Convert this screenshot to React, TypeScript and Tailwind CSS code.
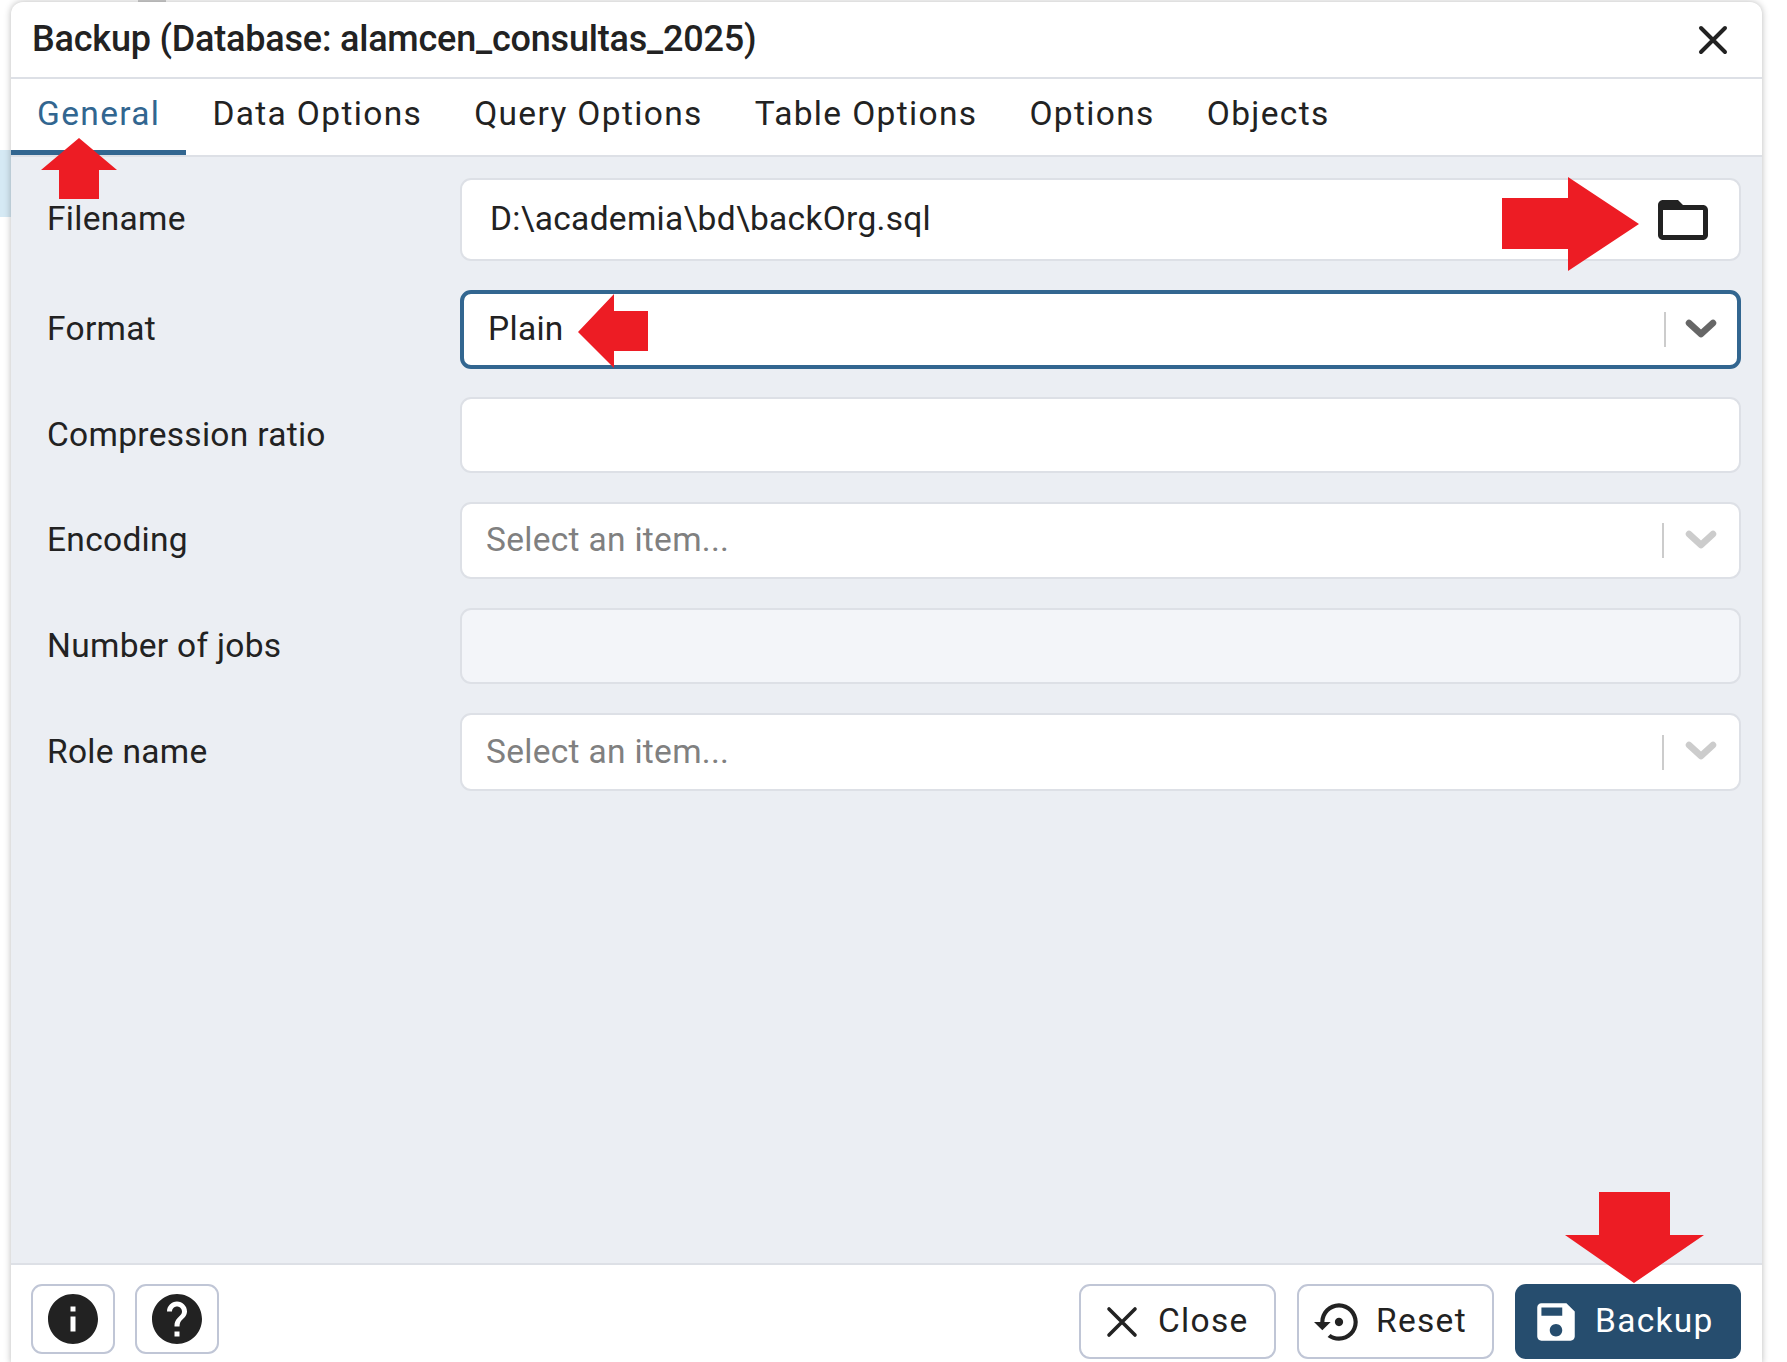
const F = "[font-family:Roboto,'Liberation_Sans',sans-serif]";

function Chevron({ active }: { active?: boolean }) {
  return (
    <svg width="36" height="26" viewBox="0 0 36 26" className="shrink-0">
      <polyline points="6,6 18,17 30,6" fill="none" stroke={active ? "#666666" : "#cccccc"} strokeWidth="6.5" strokeLinecap="round" strokeLinejoin="round" />
    </svg>
  );
}

function MuiIcon({ d, size, className }: { d: string; size: number; className?: string }) {
  return (
    <svg width={size} height={size} viewBox="0 0 24 24" className={className} fill="currentColor">
      <path d={d} />
    </svg>
  );
}

function Row({ label, labelClass, inputClass, children }: { label: string; labelClass?: string; inputClass: string; children?: React.ReactNode }) {
  return (
    <div className="flex items-center">
      <div className={`w-[449px] pl-[36px] text-[33.5px] tracking-[0.3px] text-[#222222] ${labelClass ?? ""}`}>{label}</div>
      <div className={`flex-1 rounded-[11px] flex items-center ${inputClass}`}>{children}</div>
    </div>
  );
}

function SelectEnd({ active }: { active?: boolean }) {
  return (
    <div className="ml-auto flex items-center">
      <div className="w-[2px] h-[35px] bg-[#cccccc]" />
      <div className="ml-[19px] mr-[20px]"><Chevron active={active} /></div>
    </div>
  );
}

const tabs = ["General", "Data Options", "Query Options", "Table Options", "Options", "Objects"];

export default function App() {
  return (
    <div className={`relative w-[1787px] h-[1362px] overflow-hidden bg-white pl-[11px] pt-[2px] ${F}`}>
      <div className="absolute left-0 top-[150px] w-[11px] h-[67px] bg-[#d5e9f4]" />
      <div className="absolute left-[138px] top-0 w-[28px] h-[2px] bg-[#cfcfcf]" />

      <div className="relative w-[1751px] h-[1362px] flex flex-col bg-white rounded-t-[12px] shadow-[0_0_7px_rgba(0,0,0,0.28)]">
        <div className="h-[77px] shrink-0 flex items-center justify-between pl-[21px] pr-[34px] border-b-[2px] border-[#dde0e6]">
          <div className="text-[36px] font-medium text-[#222222] tracking-[-0.2px] leading-none -mt-[2px]">Backup (Database: alamcen_consultas_2025)</div>
          <svg width="30" height="30" viewBox="0 0 30 30" className="mr-[0px]">
            <path d="M3 3 L27 27 M27 3 L3 27" stroke="#222222" strokeWidth="4" strokeLinecap="round" />
          </svg>
        </div>

        <div className="h-[78px] shrink-0 flex border-b-[2px] border-[#dde0e6]">
          {tabs.map((t, i) => (
            <div key={t} className={`h-[76px] px-[26px] flex items-center text-[33.5px] tracking-[1.35px] border-b-[5px] ${i === 0 ? "text-[#326690] border-[#326690]" : "text-[#222222] border-transparent"}`}>
              {t}
            </div>
          ))}
        </div>

        <div className="flex-1 bg-[#ebeef3] pt-[21px] pr-[21px] flex flex-col">
          <Row label="Filename" inputClass="h-[83px] bg-white border-[2px] border-[#dde0e6]">
            <span className="pl-[28px] text-[33.5px] tracking-[0.3px] text-[#222222]">D:\academia\bd\backOrg.sql</span>
            <MuiIcon className="ml-auto mr-[26px] text-[#222222]" size={60} d="M20 6h-8l-2-2H4c-1.1 0-1.99.9-1.99 2L2 18c0 1.1.9 2 2 2h16c1.1 0 2-.9 2-2V8c0-1.1-.9-2-2-2zm0 12H4V8h16v10z" />
          </Row>
          <div className="h-[29px]" />
          <Row label="Format" inputClass="h-[79px] bg-white border-[4px] border-[#326690]">
            <span className="pl-[24px] text-[33.5px] tracking-[0.3px] text-[#222222]">Plain</span>
            <div className="ml-auto flex items-center">
              <div className="w-[2px] h-[35px] bg-[#cccccc]" />
              <div className="ml-[17px] mr-[18px]"><Chevron active /></div>
            </div>
          </Row>
          <div className="h-[28px]" />
          <Row label="Compression ratio" inputClass="h-[76px] bg-white border-[2px] border-[#dde0e6]" />
          <div className="h-[29px]" />
          <Row label="Encoding" inputClass="h-[77px] bg-white border-[2px] border-[#dde0e6]">
            <span className="pl-[24px] text-[33.5px] tracking-[0.3px] text-[#808080]">Select an item...</span>
            <SelectEnd />
          </Row>
          <div className="h-[29px]" />
          <Row label="Number of jobs" inputClass="h-[76px] bg-[#f3f5f9] border-[2px] border-[#dde0e6]" />
          <div className="h-[29px]" />
          <Row label="Role name" inputClass="h-[78px] bg-white border-[2px] border-[#dde0e6]">
            <span className="pl-[24px] text-[33.5px] tracking-[0.3px] text-[#808080]">Select an item...</span>
            <SelectEnd />
          </Row>
        </div>

        <div className="h-[101px] shrink-0 border-t-[2px] border-[#dde0e6] flex items-start justify-between pl-[20px] pr-[21px] pt-[19px]">
          <div className="flex gap-[20px]">
            <div className="w-[84px] h-[70px] rounded-[11px] border-[2px] border-[#c0c6d6] flex items-center justify-center text-[#222222]">
              <MuiIcon size={60} d="M12 2C6.48 2 2 6.48 2 12s4.48 10 10 10 10-4.48 10-10S17.52 2 12 2zm1 15h-2v-6h2v6zm0-8h-2V7h2v2z" />
            </div>
            <div className="w-[84px] h-[70px] rounded-[11px] border-[2px] border-[#c0c6d6] flex items-center justify-center text-[#222222]">
              <MuiIcon size={60} d="M12 2C6.48 2 2 6.48 2 12s4.48 10 10 10 10-4.48 10-10S17.52 2 12 2zm1 17h-2v-2h2v2zm2.07-7.75l-.9.92C13.45 12.9 13 13.5 13 15h-2v-.5c0-1.1.45-2.1 1.17-2.83l1.24-1.26c.37-.36.59-.86.59-1.41 0-1.1-.9-2-2-2s-2 .9-2 2H8c0-2.21 1.79-4 4-4s4 1.79 4 4c0 .88-.36 1.68-.93 2.25z" />
            </div>
          </div>
          <div className="flex gap-[21px]">
            <div className="w-[197px] h-[75px] rounded-[11px] border-[2px] border-[#c0c6d6] flex items-center pl-[25px] text-[#222222] text-[33.5px] tracking-[1.3px]">
              <svg width="32" height="32" viewBox="0 0 32 32" className="mr-[20px]"><path d="M3 3 L29 29 M29 3 L3 29" stroke="#222222" strokeWidth="3.6" strokeLinecap="round" /></svg>
              Close
            </div>
            <div className="w-[197px] h-[75px] rounded-[11px] border-[2px] border-[#c0c6d6] flex items-center pl-[15px] text-[#222222] text-[33.5px] tracking-[1.3px]">
              <MuiIcon className="mr-[12px]" size={50} d="M14 12c0-1.1-.9-2-2-2s-2 .9-2 2 .9 2 2 2 2-.9 2-2zm-2-9c-4.97 0-9 4.03-9 9H0l4 4 4-4H5c0-3.87 3.13-7 7-7s7 3.13 7 7-3.13 7-7 7c-1.51 0-2.91-.49-4.06-1.3l-1.42 1.44C8.04 20.3 9.94 21 12 21c4.97 0 9-4.03 9-9s-4.03-9-9-9z" />
              Reset
            </div>
            <div className="w-[226px] h-[75px] rounded-[11px] bg-[#264d6e] flex items-center pl-[16px] text-white text-[33.5px] tracking-[1.3px]">
              <MuiIcon className="mr-[14px]" size={50} d="M17 3H5c-1.11 0-2 .9-2 2v14c0 1.1.89 2 2 2h14c1.1 0 2-.9 2-2V7l-4-4zm-5 16c-1.66 0-3-1.34-3-3s1.34-3 3-3 3 1.34 3 3-1.34 3-3 3zm3-10H5V5h10v4z" />
              Backup
            </div>
          </div>
        </div>
      </div>

      {/* red annotation arrows over the dialog */}
      <svg className="absolute left-0 top-0 pointer-events-none" width="1787" height="1362" viewBox="0 0 1787 1362">
        <polygon fill="#ed1c24" points="79,138 117,170 99,170 99,199 59,199 59,170 41,170" />
        <polygon fill="#ed1c24" points="1502,198 1568,198 1568,177 1639,224 1568,271 1568,249 1502,249" />
        <polygon fill="#ed1c24" points="578,332 614,294 614,311 648,311 648,351 614,351 614,368" />
        <polygon fill="#ed1c24" points="1599,1192 1670,1192 1670,1235 1704,1235 1634,1283 1565,1235 1599,1235" />
      </svg>
    </div>
  );
}
